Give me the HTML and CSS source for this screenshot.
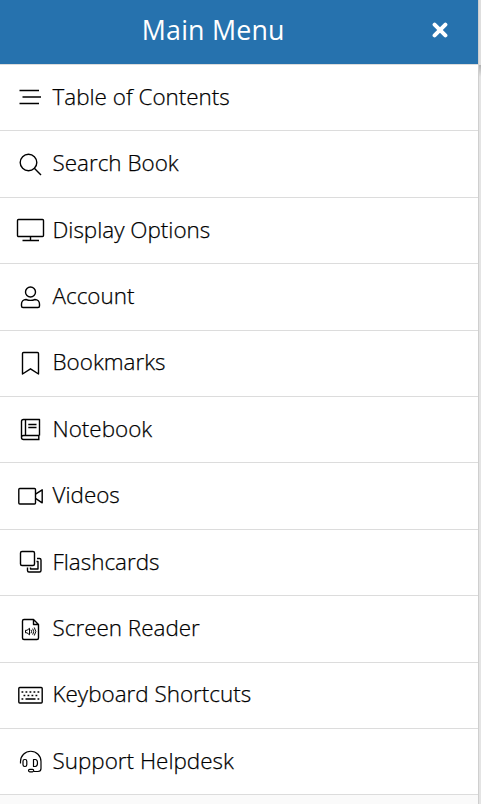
FILE: index.html
```html
<!DOCTYPE html>
<html lang="en">

<head>
    <meta charset="UTF-8">
    <meta name="viewport" content="width=device-width, initial-scale=1.0">
    <title>Main Menu</title>
    <link rel="stylesheet" href="styles.css">
</head>

<body>
    <div class="page">
        <nav class="menu">
            <header class="menu-header">
                <h1>Main Menu</h1>
                <button class="close" aria-label="Close">
                    <svg viewBox="0 0 16 16"><path d="M2.6 2.6l10.8 10.8M13.4 2.6L2.6 13.4"/></svg>
                </button>
            </header>
            <ul class="menu-list">
                <li>
                    <svg class="icon" viewBox="0 0 32 32"><path d="M5.5 9.5H25M8.5 16H27M5.5 22.5H25"/></svg>
                    <span>Table of Contents</span>
                </li>
                <li>
                    <svg class="icon" viewBox="0 0 32 32"><circle cx="14.5" cy="14.5" r="8.3"/><path d="M20.3 20.3l6.7 6.7"/></svg>
                    <span>Search Book</span>
                </li>
                <li>
                    <svg class="icon" viewBox="0 0 32 32"><rect x="3.5" y="5.5" width="26" height="17" rx="1"/><path d="M16.5 22.5v4M8.5 26.5h16.5"/></svg>
                    <span>Display Options</span>
                </li>
                <li>
                    <svg class="icon" viewBox="0 0 32 32"><circle cx="16.5" cy="11" r="5"/><path d="M12 18.5c2.5 1 6.5 1 9 0c2.5 0 4.5 2 4.5 4.5v2q0 1.500-1.500 1.500h-15q-1.500 0-1.500-1.500v-2c0-2.500 2-4.500 4.500-4.500z"/></svg>
                    <span>Account</span>
                </li>
                <li>
                    <svg class="icon" viewBox="0 0 32 32"><path d="M8.500 27V6.500q0-1 1-1h14q1 0 1 1V27l-8-5.200z"/></svg>
                    <span>Bookmarks</span>
                </li>
                <li>
                    <svg class="icon" viewBox="0 0 32 32"><path d="M25.500 22.500V6.500H9.500q-2 0-2 2v16q0 2 2 2h16M7.500 24.500q0-2 2-2h16M24.800 22.500v4M11.500 6.500v16M14.300 11.500h8.200M14.300 14.500h8.200"/></svg>
                    <span>Notebook</span>
                </li>
                <li>
                    <svg class="icon" viewBox="0 0 32 32"><rect x="4.800" y="8.500" width="16.700" height="15.500" rx="1"/><path d="M21.500 14.200l6.700-4.400v13l-6.700-4.400"/></svg>
                    <span>Videos</span>
                </li>
                <li>
                    <svg class="icon" viewBox="0 0 32 32"><rect x="6.500" y="5.500" width="14" height="14" rx="1.500"/><path d="M13.500 21.500v3q0 1.500 1.500 1.500h10.500q1.500 0 1.500-1.500V14q0-1.500-1.500-1.500h-2.500M16.500 21.500v1.500h7.500v-7.500h-1.500"/></svg>
                    <span>Flashcards</span>
                </li>
                <li>
                    <svg class="icon" viewBox="0 0 32 32"><path d="M19.500 6.500h-9.500q-1.500 0-1.500 1.500v17q0 1.500 1.500 1.500h13q1.500 0 1.500-1.500V11.500zM19.500 6.500v5h5"/><path class="fine" d="M11.500 17.300h1.500l2.500-2v6.500l-2.500-2h-1.500zM17 16.800q1.200 1.700 0 3.500M18.700 15.600q2 3 0 6M20.300 14.500q3 4 0 8"/></svg>
                    <span>Screen Reader</span>
                </li>
                <li>
                    <svg class="icon" viewBox="0 0 32 32"><rect x="4.800" y="8.500" width="23.400" height="15.500" rx="1"/><path class="keys" d="M7.500 13h1.800M11.500 13h1.800M15.500 13h1.800M19.500 13h1.800M23.500 13h1.800M9.500 16.500h1.800M13.500 16.500h1.800M17.500 16.500h1.800M21.500 16.500h1.800M7.500 20h1.800M11.500 20h10M23.500 20h1.800"/></svg>
                    <span>Keyboard Shortcuts</span>
                </li>
                <li>
                    <svg class="icon headset" viewBox="0 0 32 32"><path d="M6.500 18.500v-2a10.200 10.200 0 0 1 20.500 0v7q0 3-3 3h-4"/><rect x="9" y="14.500" width="3.800" height="7" rx="1.700"/><path d="M19.500 14.500h1.700c1.500 0 2.300 1.500 2.300 3.500s-.8 3.500-2.300 3.500h-1.700z"/><rect x="14.500" y="24.300" width="5.200" height="2.500" rx="1.200"/></svg>
                    <span>Support Helpdesk</span>
                </li>
            </ul>
        </nav>
        <!-- strip of the page behind the open menu -->
        <div class="behind">
            <div class="behind-bar"></div>
            <div class="behind-content"></div>
        </div>
    </div>
</body>
</html>
```
FILE: styles.css
```css
* {
    box-sizing: border-box;
}

body {
    margin: 0;
    font-family: "Open Sans", "Liberation Sans", sans-serif;
    color: #000;
    overflow: hidden;
}

.page {
    display: flex;
    height: 804px;
}

.menu {
    width: 478px;
    background-color: #fafafa;
}

.menu-header {
    display: flex;
    align-items: center;
    height: 64px;
    padding-right: 30.5px;
    background-color: #2672ae;
    color: #fff;
}

.menu-header h1 {
    flex: 1;
    margin: 0;
    padding-bottom: 4px;
    font-size: 26.8px;
    font-weight: 500;
    line-height: 36px;
    letter-spacing: 0.2px;
    text-align: center;
    text-indent: -5px;
}

.close {
    width: 16px;
    height: 16px;
    margin-bottom: 4px;
    padding: 0;
    border: 0;
    background: none;
}

.close svg {
    display: block;
    width: 16px;
    height: 16px;
    stroke: #fff;
    stroke-width: 4;
    stroke-linecap: round;
}

.menu-list {
    margin: 0;
    padding: 0;
    list-style: none;
    border-top: 1px solid #dcdcdc;
}

.menu-list li {
    display: flex;
    align-items: center;
    gap: 6.5px;
    height: 66.4px;
    padding: 0 0 0.6px 14px;
    background-color: #fff;
    border-bottom: 1px solid #dcdcdc;
    font-size: 22.45px;
    font-weight: 300;
    line-height: 30px;
    -webkit-text-stroke: 0.25px #000;
}

.menu-list span {
    padding-bottom: 1px;
}

.icon {
    width: 32px;
    height: 32px;
    fill: none;
    stroke: #000;
    stroke-width: 1.4;
    stroke-linejoin: round;
}

.icon .fine {
    stroke-width: 1;
}

.icon .keys {
    stroke-width: 1.6;
}

.headset {
    stroke-width: 1.2;
}

.behind {
    width: 3px;
    border-left: 1px solid #cfcfcf;
}

.behind-bar {
    height: 65px;
    background-color: #dedede;
}

.behind-content {
    height: 739px;
    background: linear-gradient(#b0b0b0, #e4e4e4 12px);
}
```
